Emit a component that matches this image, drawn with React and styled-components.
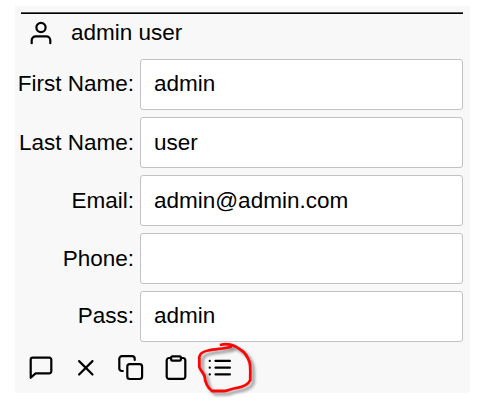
import React from "react";
import styled, { createGlobalStyle } from "styled-components";

const GlobalStyle = createGlobalStyle`
  * { box-sizing: border-box; }
  body {
    margin: 0;
    background: #fff;
    color: #000;
    font: 22.5px/26px "Liberation Sans", Arial, sans-serif;
  }
`;

const Page = styled.main`
  width: 487px;
  height: 411px;
  padding: 6px 17px 18px 15px;
`;

const Card = styled.section`
  position: relative;
  height: 387px;
  padding: 6px 7px 0 0;
  background: #f8f8f8;
`;

const Divider = styled.div`
  height: 2px;
  margin-left: 6px;
  background: linear-gradient(#555 50%, #000 50%);
`;

const Header = styled.header`
  display: flex;
  align-items: center;
  gap: 16px;
  height: 38px;
  padding-left: 12px;
`;

const Title = styled.span`
  white-space: nowrap;
`;

const Form = styled.div`
  display: grid;
  grid-template-columns: 119px 323px;
  column-gap: 6px;
  row-gap: 7px;
  margin-top: 7px;
  align-items: center;
`;

const Label = styled.label`
  padding-bottom: ${({ $raised }) => ($raised ? 1 : 0)}px;
  text-align: right;
  white-space: nowrap;
`;

const Input = styled.input`
  display: block;
  width: 100%;
  height: 51px;
  padding: 0 13px ${({ $raised }) => ($raised ? 1 : 0)}px;
  border: 1px solid #c2c2c2;
  border-radius: 3px;
  background: #fff;
  color: #000;
  font: inherit;
  outline: none;
`;

const Toolbar = styled.div`
  display: flex;
  gap: 17px;
  padding: 12px 0 0 12px;
`;

const IconButton = styled.button`
  display: flex;
  width: 28px;
  height: 28px;
  padding: 0;
  border: 0;
  background: none;
  color: inherit;
`;

const Glyph = styled.svg`
  display: block;
  flex: none;
  width: 28px;
  height: 28px;
  fill: none;
  stroke: #000;
  stroke-width: 2.2;
  stroke-linecap: round;
  stroke-linejoin: round;
`;

const Scribble = styled.svg`
  position: absolute;
  left: 175px;
  top: 330px;
  width: 75px;
  height: 70px;
  overflow: visible;
  fill: none;
  stroke: #fb0505;
  stroke-width: 2.8;
  stroke-linecap: round;
  stroke-linejoin: round;
  filter: drop-shadow(3px 3px 1.6px rgba(0, 0, 0, 0.42));
  pointer-events: none;
`;

const fields = [
  { label: "First Name:", value: "admin", raised: true },
  { label: "Last Name:", value: "user" },
  { label: "Email:", value: "admin@admin.com" },
  { label: "Phone:", value: "" },
  { label: "Pass:", value: "admin", raised: true },
];

const actions = [
  {
    name: "Message",
    art: <path d="M5.8 3.6H22.2a2.1 2.1 0 0 1 2.1 2.1v11.6a2.1 2.1 0 0 1-2.1 2.1H8.6L3.7 23.8V5.7a2.1 2.1 0 0 1 2.1-2.1Z" />,
  },
  { name: "Close", art: <path d="m7.1 7.1 13.4 13.4M20.5 7.1 7.1 20.5" /> },
  {
    name: "Copy",
    art: (
      <>
        <rect x="10.3" y="10.2" width="14.8" height="14.8" rx="2.5" />
        <path d="M5.8 17H4.9a2.6 2.6 0 0 1-2.6-2.6V4.8A2.6 2.6 0 0 1 4.9 2.2h10.2a2.6 2.6 0 0 1 2.6 2.6v1.2" />
      </>
    ),
  },
  {
    name: "Clipboard",
    art: (
      <>
        <path d="M9 4H7.1A2.4 2.4 0 0 0 4.7 6.4v16.1A2.4 2.4 0 0 0 7.1 24.9h13.8a2.4 2.4 0 0 0 2.4-2.4V6.4a2.4 2.4 0 0 0-2.4-2.4H19" />
        <rect x="9.1" y="2.4" width="9.8" height="4.3" rx="1.2" />
      </>
    ),
  },
  {
    name: "List",
    art: (
      <>
        <path d="M8.5 6.9h14.4M8.5 13.7h14.4M8.5 20.4h14.4" />
        <path d="M2.7 6.9h.1M2.7 13.7h.1M2.7 20.4h.1" />
      </>
    ),
  },
];

export default function App() {
  return (
    <>
      <GlobalStyle />
      <Page>
        <Card>
          <Divider />
          <Header>
            <Glyph viewBox="0 0 28 28">
              <circle cx="14" cy="8.5" r="4.6" />
              <path d="M4.7 24.2V21.3a4 4 0 0 1 4-4h10.6a4 4 0 0 1 4 4v2.9" />
            </Glyph>
            <Title>admin user</Title>
          </Header>
          <Form>
            {fields.map(({ label, value, raised }) => (
              <React.Fragment key={label}>
                <Label htmlFor={label} $raised={raised}>{label}</Label>
                <Input id={label} defaultValue={value} $raised={raised} />
              </React.Fragment>
            ))}
          </Form>
          <Toolbar>
            {actions.map(({ name, art }) => (
              <IconButton key={name} aria-label={name}>
                <Glyph viewBox="0 0 28 28">{art}</Glyph>
              </IconButton>
            ))}
          </Toolbar>
          <Scribble viewBox="190 336 75 70">
            <path d="M221 344.8C226 343 235 344.5 241 350C246 353 248 358 249.5 362C251 368 250 374 250.3 380C248 385 243 387 237 387.8C231 388.5 229 391 224 391H212C208 388 205 382 204.5 376C203 372 200 370 199.3 367V357C200 353 203 351.5 208 350.5C215 348.7 223 349 230.5 347" />
          </Scribble>
        </Card>
      </Page>
    </>
  );
}
